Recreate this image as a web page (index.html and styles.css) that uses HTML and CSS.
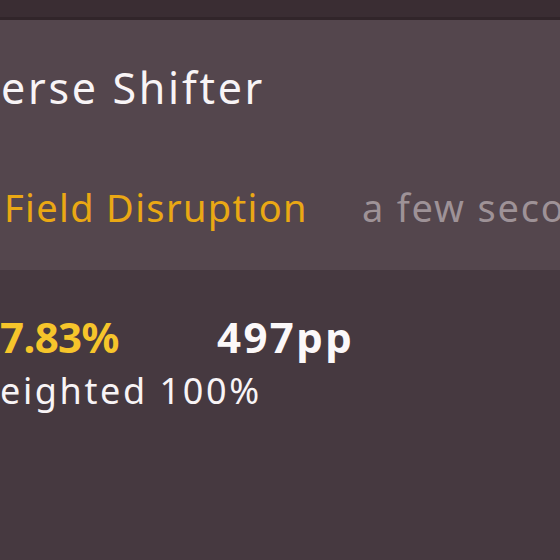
FILE: index.html
```html
<!DOCTYPE html>
<html>
<head>
<meta charset="utf-8">
<link rel="stylesheet" href="styles.css">
</head>
<body>
<div class="topbar"></div>
<section class="panel">
  <div class="title">erse Shifter</div>
  <div class="meta">
    <span class="version">Field Disruption</span>
    <span class="time">a few seconds ago</span>
  </div>
</section>
<section class="stats">
  <div class="stat-row">
    <span class="acc">7.83%</span>
    <span class="pp">497pp</span>
  </div>
  <div class="weight">eighted 100%</div>
</section>
</body>
</html>
```
FILE: styles.css
```css
html, body {
  margin: 0;
  padding: 0;
}
body {
  width: 560px;
  height: 560px;
  overflow: hidden;
  background: #463940;
  font-family: "Noto Sans", "DejaVu Sans", sans-serif;
  white-space: nowrap;
}
.topbar {
  height: 17px;
  background: #3a2d33;
  border-bottom: 3px solid #31252a;
}
.panel {
  height: 250px;
  background: #54464d;
  display: flex;
  flex-direction: column;
  overflow: hidden;
}
.title {
  margin-top: 43px;
  font-size: 43px;
  line-height: 50px;
  font-weight: 400;
  letter-spacing: 2.7px;
  color: #f8f4f6;
  padding-left: 1px;
}
.meta {
  margin-top: 72px;
  display: flex;
  gap: 54px;
  font-size: 38px;
  line-height: 44px;
  font-weight: 400;
  letter-spacing: 1.35px;
  padding-left: 4px;
}
.version {
  color: #eaa814;
}
.time {
  color: #9e9297;
  letter-spacing: 1.8px;
}
.stats {
  display: flex;
  flex-direction: column;
}
.stat-row {
  margin-top: 43px;
  display: grid;
  grid-template-columns: 217px auto;
  font-size: 42px;
  line-height: 48px;
  font-weight: 700;
}
.acc {
  color: #f6c52b;
  letter-spacing: -0.6px;
}
.pp {
  color: #fbf8f9;
  letter-spacing: 2.4px;
}
.weight {
  margin-top: 9px;
  font-size: 36px;
  line-height: 42px;
  font-weight: 400;
  letter-spacing: 2.6px;
  color: #f8f4f6;
}
```
